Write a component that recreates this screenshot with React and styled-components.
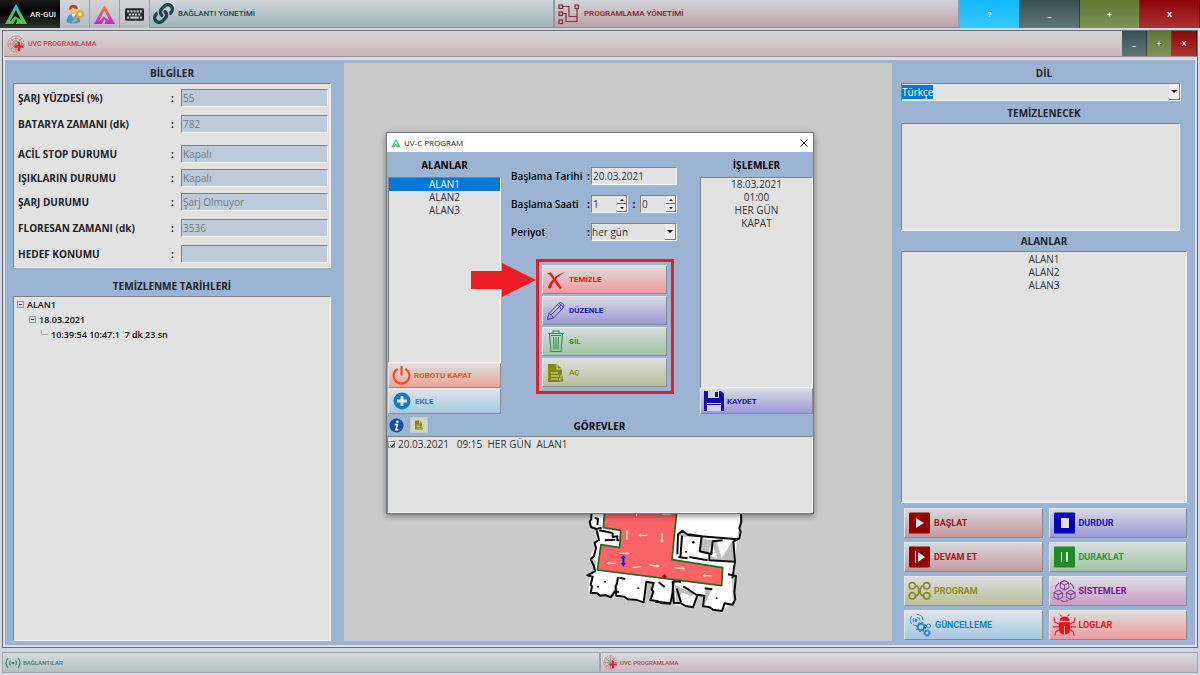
import React from 'react';
import styled, { createGlobalStyle } from 'styled-components';
import { FaLink, FaKeyboard } from 'react-icons/fa';

const GlobalStyle = createGlobalStyle`
  * {
    box-sizing: border-box;
  }
  body {
    margin: 0;
    background: #d3d7df;
    font-family: 'Open Sans', 'Noto Sans', sans-serif;
    font-size: 10px;
    color: #1d2125;
  }
  button, input, select {
    font-family: inherit;
    font-size: inherit;
    margin: 0;
  }
  ul {
    list-style: none;
    margin: 0;
    padding: 0;
  }
`;

const tones = {
  red: { color: '#9d1620', from: '#d9d8dd', to: '#c29a9e' },
  blue: { color: '#1410b4', from: '#d9dae2', to: '#9b9ad6' },
  green: { color: '#2f9440', from: '#d7dddc', to: '#a4c4a6' },
  olive: { color: '#8a8d20', from: '#dcdedd', to: '#bcbf9c' },
  purple: { color: '#7d1283', from: '#dedde6', to: '#c79fc6' },
  sky: { color: '#1c80cc', from: '#dfe5ea', to: '#a5c8e4' },
  bright: { color: '#f01414', from: '#e0dddf', to: '#f09a9e' },
  orange: { color: '#f4512a', from: '#e0dcdc', to: '#eaa798' },
};

const Page = styled.div`
  min-height: 100vh;
  display: flex;
  flex-direction: column;
`;

const TopBar = styled.header`
  display: flex;
  height: 28px;
  margin-bottom: 2px;
`;

const IconButton = styled.button`
  width: 30px;
  padding: 0;
  display: flex;
  align-items: center;
  justify-content: center;
  border: 0;
  border-right: 1px solid #9a9da3;
  background: linear-gradient(#d3d5d9, #b9bbc1);
`;

const BrandButton = styled(IconButton)`
  width: 60px;
  gap: 2px;
  border: 0;
  background: linear-gradient(#1a1a1a, #000 40%, #33352f);
  color: #e8e8e8;
  font-family: Roboto, sans-serif;
  font-size: 8px;
  font-weight: 500;
`;

const MenuTab = styled.button`
  flex: 1;
  padding: 0 3px;
  display: flex;
  align-items: center;
  gap: 4px;
  border: 0;
  border-right: 2px solid #96999d;
  border-bottom: 1px solid #8a8d92;
  background: linear-gradient(#d2d6db, ${({ $to }) => $to});
  color: ${({ $color }) => $color};
  font-family: Roboto, sans-serif;
  font-size: 8px;
  font-weight: 500;
`;

const WindowButton = styled.button`
  width: ${({ $small }) => ($small ? 25 : 60)}px;
  padding: 0;
  border: 0;
  border-right: 1px solid rgba(0, 0, 0, 0.35);
  background: linear-gradient(${({ $from, $to }) => `${$from}, ${$to}`});
  color: #e6e8e6;
  font-family: Roboto, sans-serif;
  font-size: 8px;
  font-weight: 700;
`;

const Window = styled.main`
  flex: 1;
  margin: 0 2px;
  display: flex;
  flex-direction: column;
  border: 1px solid #6b6f76;
  padding: 0 0 0 1px;
  background: #d9dee8;
`;

const TitleBar = styled.div`
  height: 26px;
  margin-bottom: 3px;
  display: flex;
  border-bottom: 1px solid #a58f92;
  background: linear-gradient(#d6d7da, #ccb5b8);
`;

const WindowTitle = styled.h1`
  flex: 1;
  margin: 0;
  padding-left: 3px;
  display: flex;
  align-items: center;
  gap: 3px;
  color: #c7434d;
  font-family: Roboto, sans-serif;
  font-size: 7px;
  font-weight: 500;
`;

const Body = styled.div`
  flex: 1;
  margin: 0 2px 2px 1px;
  padding: 3px 8px 4px;
  display: grid;
  grid-template-columns: 318px 1fr 286px;
  column-gap: 9px;
  background: #9cb4d2;
`;

const Column = styled.section`
  display: flex;
  flex-direction: column;
`;

const Heading = styled.h2`
  height: ${({ $tall }) => ($tall ? 22 : 20)}px;
  margin: 0;
  font-size: 10px;
  font-weight: 700;
  line-height: ${({ $tall }) => ($tall ? 24 : 20)}px;
  text-align: center;
`;

const Panel = styled.div`
  flex: ${({ $grow }) => ($grow ? '1' : 'none')};
  border: 1px solid #f4f4f4;
  border-top-color: #7f8288;
  border-left-color: #7f8288;
  background: #e2e2e3;
`;

const InfoPanel = styled(Panel)`
  padding: 5px 2px 4px 4px;
  margin-bottom: 8px;
`;

const InfoRow = styled.div`
  height: 18px;
  margin-bottom: ${({ $gap }) => $gap}px;
  display: flex;
  align-items: center;
`;

const InfoLabel = styled.label`
  flex: 1;
  font-weight: 700;
  white-space: nowrap;
`;

const Colon = styled.span`
  width: 10px;
  font-weight: 700;
`;

const Field = styled.input`
  width: ${({ $width }) => $width}px;
  height: 18px;
  padding: 0 1px;
  border: 1px solid #f4f4f4;
  border-top-color: #7f8288;
  border-left-color: #7f8288;
  border-radius: 0;
  outline: 0;
  background: ${({ readOnly }) => (readOnly ? '#bfcbd9' : '#e2e2e3')};
  color: ${({ readOnly }) => (readOnly ? '#74787e' : '#33363a')};
`;

const AreaList = styled(Panel)`
  padding-top: 1px;
`;

const TreeItem = styled.li`
  height: 15px;
  padding-left: ${({ $level }) => $level * 12 + 3}px;
  display: flex;
  align-items: center;
  gap: 3px;
  font-size: 9px;
  font-weight: 600;
  color: #111;
  white-space: pre;
`;

const MapArea = styled.section`
  margin-left: 4px;
  display: flex;
  align-items: flex-end;
  justify-content: center;
  padding: 0 0 21px 94px;
  background: #cccbcb;
`;

const SelectBox = styled.div`
  position: relative;
  width: ${({ $width }) => $width}px;
`;

const Select = styled.select`
  appearance: none;
  display: block;
  width: 100%;
  height: 18px;
  padding: 0;
  border: 1px solid #f4f4f4;
  border-top-color: #7f8288;
  border-left-color: #7f8288;
  border-radius: 0;
  color: ${({ $marked }) => ($marked ? '#fff' : '#33363a')};
  background: ${({ $marked }) =>
    $marked ? 'linear-gradient(#0078d7, #0078d7) 0 1px / 31px 14px no-repeat #e2e2e3' : '#e2e2e3'};
`;

const SelectArrow = styled.span`
  position: absolute;
  top: 1px;
  right: 1px;
  width: 11px;
  height: 16px;
  display: flex;
  align-items: center;
  justify-content: center;
  border-right: 1px solid #777;
  border-bottom: 1px solid #777;
  background: #f0f0f0;
  pointer-events: none;

  &::after {
    content: '';
    border: 3px solid transparent;
    border-top-color: #111;
    border-bottom: 0;
  }
`;

const Item = styled.li`
  height: 13px;
  line-height: 13px;
  text-align: center;
  color: ${({ $active }) => ($active ? '#fff' : '#33363a')};
  background: ${({ $active }) => ($active ? '#0078d7' : 'transparent')};
`;

const ButtonGrid = styled.div`
  margin: 5px 0 1px 3px;
  display: grid;
  grid-template-columns: 1fr 1fr;
  gap: 4px 6px;
`;

const ActionButton = styled.button`
  height: ${({ $height }) => $height || 30}px;
  padding: 0 3px;
  display: flex;
  align-items: center;
  gap: 3px;
  border: 1px solid #e4e7ea;
  border-right-color: #878c94;
  border-bottom-color: #878c94;
  background: linear-gradient(${({ $tone }) => `${tones[$tone].from}, ${tones[$tone].to}`});
  color: ${({ $tone }) => tones[$tone].color};
  font-family: Roboto, sans-serif;
  font-size: ${({ $height }) => ($height ? 8 : 9)}px;
  font-weight: 700;
  white-space: nowrap;

  svg {
    flex: none;
  }
`;

const StatusBar = styled.footer`
  height: 21px;
  margin: 4px 2px 2px;
  display: flex;
`;

const StatusTab = styled.div`
  flex: 1;
  padding-left: 2px;
  display: flex;
  align-items: center;
  gap: 2px;
  border: 1px solid #a2a6ab;
  background: linear-gradient(#d8dce1, ${({ $to }) => $to});
  color: ${({ $color }) => $color};
  font-family: Roboto, sans-serif;
  font-size: 6px;
  font-weight: 500;
`;

const Dialog = styled.section`
  position: absolute;
  top: 132px;
  left: 50%;
  width: 428px;
  margin-left: -214px;
  border: 1px solid #747980;
  background: #9cb4d2;
  box-shadow: 0 2px 6px rgba(0, 0, 0, 0.45);
`;

const DialogTitle = styled.div`
  height: 19px;
  padding: 0 5px 0 4px;
  display: flex;
  align-items: center;
  gap: 3px;
  background: #fff;
  font-size: 8px;
`;

const CloseButton = styled.button`
  margin-left: auto;
  padding: 0;
  display: flex;
  border: 0;
  background: none;
`;

const DialogColumns = styled.div`
  height: 262px;
  padding: 3px 0 0 1px;
  display: grid;
  grid-template-columns: 113px 1fr 113px;
`;

const DialogHeading = styled(Heading)`
  height: 22px;
  color: #000;
`;

const Form = styled.form`
  padding: 12px 0 0 10px;
`;

const FormRow = styled.div`
  height: 18px;
  margin-bottom: 10px;
  display: flex;
  align-items: center;
  color: #000;
`;

const FormLabel = styled.label`
  width: 75px;
  font-weight: 600;
  white-space: nowrap;
`;

const FormColon = styled.span`
  width: ${({ $wide }) => ($wide ? 12 : 5)}px;
  text-align: center;
  font-weight: 700;
`;

const SpinBox = styled.div`
  position: relative;
  width: 37px;

  input {
    appearance: textfield;
  }
`;

const SpinArrows = styled.span`
  position: absolute;
  top: 1px;
  right: 1px;
  width: 10px;
  height: 16px;
  display: flex;
  flex-direction: column;
`;

const SpinArrow = styled.button`
  flex: 1;
  padding: 0;
  display: flex;
  align-items: center;
  justify-content: center;
  border: 0;
  border-right: 1px solid #777;
  border-bottom: 1px solid #777;
  background: #f0f0f0;

  &::after {
    content: '';
    border: 2px solid transparent;
    border-top-color: ${({ $up }) => ($up ? 'transparent' : '#111')};
    border-bottom-color: ${({ $up }) => ($up ? '#111' : 'transparent')};
    border-top-width: ${({ $up }) => ($up ? 0 : 2)}px;
    border-bottom-width: ${({ $up }) => ($up ? 2 : 0)}px;
  }
`;

const ActionFrame = styled.div`
  position: relative;
  width: 138px;
  margin: 18px 0 0 35px;
  padding: 3px 4px 4px 3px;
  display: flex;
  flex-direction: column;
  gap: 2px;
  border: 3px solid #ea1c2b;
`;

const Arrow = styled.svg`
  position: absolute;
  top: 1px;
  left: -68px;
`;

const TaskBar = styled.div`
  height: 22px;
  padding: 0 3px 0 2px;
  display: grid;
  grid-template-columns: 1fr auto 1fr;
  align-items: center;
`;

const TaskTools = styled.div`
  display: flex;
  align-items: center;
  gap: 6px;
`;

const ToolButton = styled.button`
  padding: ${({ $plain }) => ($plain ? '0' : '2px 3px')};
  display: flex;
  border: ${({ $plain }) => ($plain ? '0' : '1px solid #c8ccc2')};
  background: ${({ $plain }) => ($plain ? 'none' : '#d3d6c8')};
`;

const TaskPanel = styled(Panel)`
  height: 77px;
`;

const Task = styled.label`
  height: 14px;
  display: flex;
  align-items: center;
  gap: 3px;
  white-space: pre;
  color: #33363a;
`;

const CheckBox = styled.input`
  appearance: none;
  position: relative;
  width: 7px;
  height: 7px;
  border: 1px solid #999;
  background: #fff;

  &:checked::after {
    content: '';
    position: absolute;
    left: 2px;
    top: 0;
    width: 2px;
    height: 4px;
    border: solid #111;
    border-width: 0 1px 1px 0;
    transform: rotate(45deg);
  }
`;

const CleanPanel = styled(Panel)`
  width: 279px;
  height: 108px;
`;

const Logo = ({ id, size, from, to }) => (
  <svg width={size} height={size} viewBox="0 0 24 24">
    <defs>
      <linearGradient id={id} x1="0" y1="0" x2="0" y2="1">
        <stop offset="0" stopColor={from} />
        <stop offset="1" stopColor={to} />
      </linearGradient>
    </defs>
    <path fill={`url(#${id})`} d="M12 2L1 22h8l3-5 1 1-1 4h11zM12 8l5 10-6-4-4 5H6z" fillRule="evenodd" />
  </svg>
);

const UserKeyIcon = () => (
  <svg width="20" height="20" viewBox="0 0 24 24">
    <path d="M2 22c0-7 3-10 8-10s8 3 8 10c-5 2-11 2-16 0z" fill="#3f9bd8" />
    <path d="M8 12l2 5 3-5z" fill="#fff" />
    <circle cx="10" cy="7" r="5" fill="#eebd83" />
    <path d="M5 7c-1-8 11-8 10-1-3 0-5-1-6-2-1 2-2 3-4 3z" fill="#8a5523" />
    <g fill="none" stroke="#e2a53a" strokeWidth="2.5">
      <circle cx="18" cy="12" r="3.5" fill="#fff1bd" />
      <path d="M15 15l-6 7M12 18l2 2" />
    </g>
  </svg>
);

const NetIcon = () => (
  <svg width="22" height="22" viewBox="0 0 22 22" fill="none" stroke="#7b3440" strokeWidth="1.2">
    <rect x="1" y="2" width="3.5" height="3.5" />
    <rect x="1" y="9" width="3.5" height="3.5" />
    <rect x="1" y="17" width="3.5" height="3.5" />
    <rect x="17" y="2" width="3.5" height="3.5" />
    <path d="M5 3.5h6v10h8V6M5 10.5h3v8h11v-5" />
  </svg>
);

const GlobeIcon = ({ size = 18 }) => (
  <svg width={size} height={size} viewBox="0 0 18 18" fill="none" stroke="#b96a70" strokeWidth=".7">
    <circle cx="9" cy="9" r="8" strokeDasharray="2 .7" />
    <circle cx="9" cy="9" r="5.7" strokeDasharray="1.5 .6" />
    <circle cx="9" cy="9" r="3.2" />
    <path d="M9 1v16M1 9h16M3.5 3.5l11 11M14.5 3.5l-11 11" />
    <path d="M12 7v9M7.5 11.5h9" stroke="#c6303b" strokeWidth="2.4" />
  </svg>
);

const SignalIcon = () => (
  <svg width="16" height="12" viewBox="0 0 16 12" fill="none" stroke="#3e7a72" strokeWidth="1.2">
    <circle cx="8" cy="6" r="1.3" fill="#3e7a72" stroke="none" />
    <path d="M5.5 3.5q-1.8 2.5 0 5M10.5 3.5q1.8 2.5 0 5M3 1Q-1 6 3 11M13 1q4 5 0 10" />
  </svg>
);

const CrossIcon = () => (
  <svg width="20" height="20" viewBox="0 0 20 20" fill="#e51717">
    <path d="M1 4c2-2 4-2 5 0 4 6 7 10 10 14l-2 1C10 15 7 9 4 5 3 4 2 4 1 4z" />
    <path d="M19 2C12 6 7 11 5 18c-2 1-3 0-3-1C5 10 11 4 19 2z" />
  </svg>
);

const PencilIcon = () => (
  <svg width="20" height="22" viewBox="0 0 22 22" fill="none" stroke="#3a35b5" strokeWidth="1">
    <path d="M1.5 20.5l2-7L14 2.5q2-2 4.5.5t.5 4.500L8.500 18.500zM3.500 13.500q1 2 2.500 1.500 0 2 2.500 3.500M6 15L16.500 4.500M12.500 4q3 2 4.500 5.500M14 2.500q4 2 5 5M2 18l2 2" />
  </svg>
);

const BinIcon = () => (
  <svg width="20" height="23" viewBox="0 0 20 23" fill="none" stroke="#318e45" strokeWidth="1.1">
    <path d="M2 3.5h16M7 3V1h6v2M3.5 3.5l1.5 18h10l1.5-18M5 5.5h10M7.5 7l.5 12.5M10 7v12.5M12.5 7l-.5 12.5" />
  </svg>
);

const FileIcon = ({ size = 20 }) => (
  <svg width={size} height={size} viewBox="0 0 20 20">
    <path d="M2 1h9l5 5v13H2z" fill="#83890e" />
    <path d="M11 1v5h5M5 10h7M5 13h8M5 16h7" stroke="#d5d8b7" strokeWidth="1.2" fill="none" />
    <path d="M15 12h2v4h2l-3 4-3-4h2z" fill="#83890e" stroke="#d5d8b7" strokeWidth=".7" />
  </svg>
);

const PowerIcon = () => (
  <svg width="19" height="19" viewBox="0 0 20 20" fill="none" stroke="#f04c20" strokeWidth="2.2">
    <path d="M6 3a8.3 8.3 0 1 0 8 0M10 0v10" />
  </svg>
);

const PlusIcon = () => (
  <svg width="20" height="20" viewBox="0 0 20 20">
    <circle cx="10" cy="10" r="8.5" fill="#1579c8" />
    <path d="M10 5v10M5 10h10" stroke="#e3edf5" strokeWidth="2.8" />
  </svg>
);

const SaveIcon = () => (
  <svg width="20" height="20" viewBox="0 0 20 20">
    <path d="M0 0h17l3 3v17H0z" fill="#160ba6" />
    <path d="M4 0h11v7H4zM3 12h14v8H3z" fill="#d3d3e5" />
    <path d="M11 1h3v5h-3zM3 13h14v1H3z" fill="#160ba6" />
  </svg>
);

const InfoIcon = () => (
  <svg width="15" height="15" viewBox="0 0 16 16">
    <circle cx="8" cy="8" r="7.5" fill="#1450a4" />
    <circle cx="9" cy="4" r="1.3" fill="#fff" />
    <path d="M6 7h3l-1.5 5.5H10" stroke="#fff" strokeWidth="1.6" fill="none" />
  </svg>
);

const SquareIcon = ({ fill, d }) => (
  <svg width="23" height="22" viewBox="0 0 23 22">
    <rect width="21" height="21" x="1" y=".5" rx="1" fill={fill} />
    <path d={d} fill="#e3dfe6" />
  </svg>
);

const NodesIcon = () => (
  <svg width="23" height="20" viewBox="0 0 24 20" fill="none" stroke="#858a1c" strokeWidth="1.7">
    <circle cx="4.5" cy="4.5" r="3.3" />
    <circle cx="19.5" cy="4.5" r="3.3" />
    <circle cx="4.5" cy="15" r="3.3" />
    <circle cx="19.5" cy="15" r="3.3" />
    <path d="M7.8 4.5q3 0 3.5 5t-3.5 5.5M16.2 4.5q-3 0-3.5 5t3.5 5.5" />
  </svg>
);

const CubesIcon = () => (
  <svg width="23" height="24" viewBox="0 0 24 24" fill="none" stroke="#8c4191" strokeWidth="1.1">
    {[[12, 6], [5.5, 16], [18.5, 16]].map(([x, y]) => (
      <path key={x} d={`M${x} ${y - 5}l4.500 2.500v5l-4.500 2.500-4.500-2.500v-5zM${x - 4.5} ${y - 2.5}l4.500 2.500 4.500-2.500M${x} ${y}v5`} />
    ))}
    <path d="M6.5 4Q2.500 6 2.500 10M17.500 4q4 2 4 6M8 21.500q4 3 8 0" />
  </svg>
);

const GearsIcon = () => (
  <svg width="24" height="24" viewBox="0 0 24 24" fill="none" stroke="#2c83cc">
    <circle cx="13" cy="14" r="3.2" strokeWidth="1.8" />
    <circle cx="13" cy="14" r="4.6" strokeWidth="1.3" strokeDasharray="1.8 1.8" />
    <circle cx="20.5" cy="13" r="2" />
    <circle cx="19" cy="20" r="2.2" strokeWidth="1.5" />
    <circle cx="19" cy="20" r="3.3" strokeDasharray="1.4 1.2" />
    <circle cx="8" cy="7.5" r="1" fill="#2c83cc" />
    <path d="M6 9.5q-2-3 0-4.500M3.500 11q-3-4 0-8M8 12.500q-2 0-3-1M9 4.500q3 0 3 3M9 1.500q6 0 6 6" />
  </svg>
);

const BugIcon = () => (
  <svg width="23" height="22" viewBox="0 0 24 22">
    <path d="M6.5 6.5Q7.5 2 12 2t5.5 4.5zM6 8h12v6q0 7-6 7t-6-7z" fill="#f20f13" />
    <path
      d="M6 10L2 8 1 3M18 10l4-2 1-5M6 13H0M18 13h6M6.5 16L3 18l-1 4M17.5 16l3.5 2 1 4M9 2L7 0M15 2l2-2"
      fill="none"
      stroke="#e8252b"
      strokeWidth="1.2"
    />
    <path d="M12 12v9" stroke="#e9c5c7" />
  </svg>
);

const TreeBox = () => (
  <svg width="7" height="7" viewBox="0 0 7 7" fill="none" stroke="#9b9b9b">
    <rect x=".5" y=".5" width="6" height="6" />
    <path d="M2 3.5h3" stroke="#444" />
  </svg>
);

const TreeLine = () => (
  <svg width="7" height="9" viewBox="0 0 7 9" fill="none" stroke="#aaa">
    <path d="M.5 0v4.5H7" />
  </svg>
);

const FloorMap = () => (
  <svg width="190" height="115" viewBox="0 0 570 345" strokeLinejoin="round">
    <path
      fill="#fff"
      d="M65 0H515L508 70 500 105 496 170 485 215 488 290 455 318 402 306 400 270 385 270 372 308 314 300V240L305 296 244 290 252 235 230 230 224 292 140 275V218L130 255 115 275 55 260 60 208 75 195 78 170 62 150 78 120 82 78 62 65z"
    />
    <path
      fill="#bdbdbd"
      d="M392 98l30 8-7 42-24-5zM420 105l75 8-4 55-70-4zM235 232l18 0-14 50-10 6zM405 250l20 4-22 48zM315 240l60 28-55 25zM325 80l28 8-2 8-28-4z"
    />
    <path fill="#f6f6f6" d="M440 108l15 52 30-48zM425 112l18 48-20-6zM335 262l30 12-38 14z" />
    <path
      fill="none"
      stroke="#0b0b0b"
      strokeWidth="6"
      d="M64 0v42l-5 8 4 16 16 6 16-4M74 38l10 4-2 18M80 76l7 29-13 8 4 16-6 24-10 10 9 18 4 18-23 12 16 4-6 24 4 6-4 18 20 2 8 7 16-2 16 7 13-18 12 2M88 76l40 8M104 106l32-2M128 84v12l14-2v12h8M144 216l-3 20-4 8 2 28 24 3 10 8 24 1 24 8 8-62 22 4-6 20 5 6-9 26 20 2 12 6 28 2 6-30 4-37 22 1M148 218l18 4M308 228l3 65 22 2 14 8 22 4 14-38 20 3-4 32 18 2 12 8 27 4 8-23 24 4 8-16-3-20 5-50-24-5M404 250l23 3M487 220l8-50-5-60 18-10 4-20-4-10 6-20-2-50M322 90l15-13 18 14 148 12M324 88l-2 60M336 92l-5 68M325 156l28 4M355 88l40 6-6 45 35 8 4-38 30-3M418 148v18l78 4M358 156l55 10M320 250l13 42M340 244l40 26M266 232l18 14M255 290l45 4"
    />
    <g fill="#111">
      <circle cx="84" cy="245" r="3" />
      <circle cx="105" cy="230" r="3" />
      <circle cx="205" cy="250" r="3" />
      <circle cx="370" cy="112" r="4" />
      <circle cx="348" cy="140" r="3" />
      <circle cx="440" cy="280" r="3" />
    </g>
    <path
      fill="#fa6466"
      stroke="#1c6d1c"
      strokeWidth="5"
      d="M105 0L100 68 152 76 149 128 93 119 82 195 455 242 458 188 306 164 322 0z"
    />
    <path
      stroke="#f6ecd0"
      strokeWidth="4"
      d="M171 78v26M207 91h26M276 85v27M148 145h30M112 175h26M187 188l25-3M238 180l29 4M313 188l30 3M400 212h26M276 27h28M200 20v12"
    />
    <path
      fill="#f6ecd0"
      d="M166 82l5-7 5 7zM212 86l-8 5 8 5zM271 105l5 8 5-8zM170 140l9 5-9 5zM119 170l-8 5 8 5zM260 178l9 6-9 4zM337 186l8 5-8 4zM405 207l-8 5 8 5z"
    />
    <path d="M160 155v25" stroke="#1c13d2" strokeWidth="6" />
    <path d="M152 160l8-11 8 11zM152 174l8 11 8-11z" fill="#1c13d2" />
    <path d="M274 216l9-10 8 10-8 5z" fill="#9c1414" />
  </svg>
);

const info = [
  { id: 'charge', label: 'ŞARJ YÜZDESİ (%)', value: '55', gap: 8 },
  { id: 'battery', label: 'BATARYA ZAMANI (dk)', value: '782', gap: 12 },
  { id: 'stop', label: 'ACİL STOP DURUMU', value: 'Kapalı', gap: 6 },
  { id: 'lights', label: 'IŞIKLARIN DURUMU', value: 'Kapalı', gap: 6 },
  { id: 'charging', label: 'ŞARJ DURUMU', value: 'Şarj Olmuyor', gap: 8 },
  { id: 'lamp', label: 'FLORESAN ZAMANI (dk)', value: '3536', gap: 8 },
  { id: 'target', label: 'HEDEF KONUMU', value: '', gap: 0 },
];

const areas = ['ALAN1', 'ALAN2', 'ALAN3'];
const operations = ['18.03.2021', '01:00', 'HER GÜN', 'KAPAT'];

const commands = [
  { text: 'BAŞLAT', tone: 'red', icon: <SquareIcon fill="#930006" d="M8 6l8 5-8 5z" /> },
  { text: 'DURDUR', tone: 'blue', icon: <SquareIcon fill="#0802b8" d="M8 6h8v10H8z" /> },
  { text: 'DEVAM ET', tone: 'red', icon: <SquareIcon fill="#930006" d="M7 5h1v12H7zM10 6l7 5-7 5z" /> },
  { text: 'DURAKLAT', tone: 'green', icon: <SquareIcon fill="#218a26" d="M8 6h1v10H8zM13 6h2v10h-2z" /> },
  { text: 'PROGRAM', tone: 'olive', icon: <NodesIcon /> },
  { text: 'SİSTEMLER', tone: 'purple', icon: <CubesIcon /> },
  { text: 'GÜNCELLEME', tone: 'sky', icon: <GearsIcon /> },
  { text: 'LOGLAR', tone: 'bright', icon: <BugIcon /> },
];

const Spinner = ({ id, label, value }) => (
  <SpinBox>
    <Field id={id} aria-label={label} type="number" defaultValue={value} $width={37} />
    <SpinArrows>
      <SpinArrow type="button" $up aria-label={`${label} +`} />
      <SpinArrow type="button" aria-label={`${label} -`} />
    </SpinArrows>
  </SpinBox>
);

const ProgramDialog = () => (
  <Dialog role="dialog" aria-label="UV-C PROGRAM">
    <DialogTitle>
      <Logo id="logo-dialog" size={10} from="#35c0a0" to="#4ab84e" />
      UV-C PROGRAM
      <CloseButton aria-label="Kapat">
        <svg width="8" height="8" viewBox="0 0 8 8" stroke="#222" fill="none">
          <path d="M.5.5l7 7M7.5.5l-7 7" />
        </svg>
      </CloseButton>
    </DialogTitle>
    <DialogColumns>
      <Column>
        <DialogHeading>ALANLAR</DialogHeading>
        <Panel $grow as="ul">
          {areas.map((area, i) => (
            <Item key={area} $active={i === 0}>{area}</Item>
          ))}
        </Panel>
        <ActionButton $tone="orange" $height={25}><PowerIcon />ROBOTU KAPAT</ActionButton>
        <ActionButton $tone="sky" $height={26}><PlusIcon />EKLE</ActionButton>
      </Column>
      <div>
        <Form>
          <FormRow>
            <FormLabel htmlFor="date">Başlama Tarihi</FormLabel>
            <FormColon>:</FormColon>
            <Field id="date" defaultValue="20.03.2021" $width={86} />
          </FormRow>
          <FormRow>
            <FormLabel htmlFor="hour">Başlama Saati</FormLabel>
            <FormColon>:</FormColon>
            <Spinner id="hour" label="Saat" value="1" />
            <FormColon $wide>:</FormColon>
            <Spinner id="minute" label="Dakika" value="0" />
          </FormRow>
          <FormRow>
            <FormLabel htmlFor="period">Periyot</FormLabel>
            <FormColon>:</FormColon>
            <SelectBox $width={86}>
              <Select id="period"><option>her gün</option></Select>
              <SelectArrow />
            </SelectBox>
          </FormRow>
        </Form>
        <ActionFrame>
          <Arrow width="65" height="34" viewBox="0 0 65 34" fill="#ee1c25">
            <path d="M0 8h31V0l34 17-34 17v-8H0z" />
          </Arrow>
          <ActionButton $tone="bright" $height={29}><CrossIcon />TEMİZLE</ActionButton>
          <ActionButton $tone="blue" $height={29}><PencilIcon />DÜZENLE</ActionButton>
          <ActionButton $tone="green" $height={29}><BinIcon />SİL</ActionButton>
          <ActionButton $tone="olive" $height={29}><FileIcon />AÇ</ActionButton>
        </ActionFrame>
      </div>
      <Column>
        <DialogHeading>İŞLEMLER</DialogHeading>
        <Panel $grow as="ul">
          {operations.map((operation) => (
            <Item key={operation}>{operation}</Item>
          ))}
        </Panel>
        <ActionButton $tone="blue" $height={26}><SaveIcon />KAYDET</ActionButton>
      </Column>
    </DialogColumns>
    <TaskBar>
      <TaskTools>
        <ToolButton $plain aria-label="Bilgi"><InfoIcon /></ToolButton>
        <ToolButton aria-label="Dosya"><FileIcon size={10} /></ToolButton>
      </TaskTools>
      <DialogHeading as="h3" $tall>GÖREVLER</DialogHeading>
    </TaskBar>
    <TaskPanel>
      <Task>
        <CheckBox type="checkbox" defaultChecked />
        {'20.03.2021   09:15  HER GÜN  ALAN1'}
      </Task>
    </TaskPanel>
  </Dialog>
);

const App = () => {
  return (
    <Page>
      <GlobalStyle />
      <TopBar>
        <BrandButton>
          <Logo id="logo-brand" size={24} from="#20cbd6" to="#58c13c" />
          AR-GUI
        </BrandButton>
        <IconButton aria-label="Kullanıcı"><UserKeyIcon /></IconButton>
        <IconButton aria-label="AR"><Logo id="logo-ar" size={23} from="#f98b2c" to="#b524e0" /></IconButton>
        <IconButton aria-label="Klavye"><FaKeyboard size={19} color="#26272c" /></IconButton>
        <MenuTab $to="#9fb3b7" $color="#1c474c"><FaLink size={21} />BAĞLANTI YÖNETİMİ</MenuTab>
        <MenuTab $to="#c0a0a8" $color="#7e1f2c"><NetIcon />PROGRAMLAMA YÖNETİMİ</MenuTab>
        <WindowButton $from="#12b8fb" $to="#35c9ff">?</WindowButton>
        <WindowButton $from="#385053" $to="#60777a">_</WindowButton>
        <WindowButton $from="#60772f" $to="#80935a">+</WindowButton>
        <WindowButton $from="#8e0407" $to="#ac3434">X</WindowButton>
      </TopBar>
      <Window>
        <TitleBar>
          <WindowTitle><GlobeIcon />UVC PROGRAMLAMA</WindowTitle>
          <WindowButton $small $from="#385053" $to="#60777a">_</WindowButton>
          <WindowButton $small $from="#60772f" $to="#80935a">+</WindowButton>
          <WindowButton $small $from="#8e0407" $to="#ac3434">X</WindowButton>
        </TitleBar>
        <Body>
          <Column>
            <Heading>BİLGİLER</Heading>
            <InfoPanel>
              {info.map((row) => (
                <InfoRow key={row.id} $gap={row.gap}>
                  <InfoLabel htmlFor={row.id}>{row.label}</InfoLabel>
                  <Colon>:</Colon>
                  <Field id={row.id} readOnly value={row.value} $width={147} />
                </InfoRow>
              ))}
            </InfoPanel>
            <Heading>TEMİZLENME TARİHLERİ</Heading>
            <Panel $grow as="ul">
              <TreeItem $level={0}><TreeBox />ALAN1</TreeItem>
              <TreeItem $level={1}><TreeBox />18.03.2021</TreeItem>
              <TreeItem $level={2}><TreeLine />{'10:39:54 10:47:1  7 dk 23 sn'}</TreeItem>
            </Panel>
          </Column>
          <MapArea>
            <FloorMap />
          </MapArea>
          <Column>
            <Heading as="label" htmlFor="language">DİL</Heading>
            <SelectBox $width={280}>
              <Select id="language" $marked><option>Türkçe</option></Select>
              <SelectArrow />
            </SelectBox>
            <Heading $tall>TEMİZLENECEK</Heading>
            <CleanPanel />
            <Heading>ALANLAR</Heading>
            <AreaList $grow as="ul">
              {areas.map((area) => (
                <Item key={area}>{area}</Item>
              ))}
            </AreaList>
            <ButtonGrid>
              {commands.map((command) => (
                <ActionButton key={command.text} $tone={command.tone}>
                  {command.icon}
                  {command.text}
                </ActionButton>
              ))}
            </ButtonGrid>
          </Column>
        </Body>
      </Window>
      <StatusBar>
        <StatusTab $to="#b3c0c2" $color="#3e7a72"><SignalIcon />BAĞLANTILAR</StatusTab>
        <StatusTab $to="#cbb8bf" $color="#b8434e"><GlobeIcon size={15} />UVC PROGRAMLAMA</StatusTab>
      </StatusBar>
      <ProgramDialog />
    </Page>
  );
};

export default App;
